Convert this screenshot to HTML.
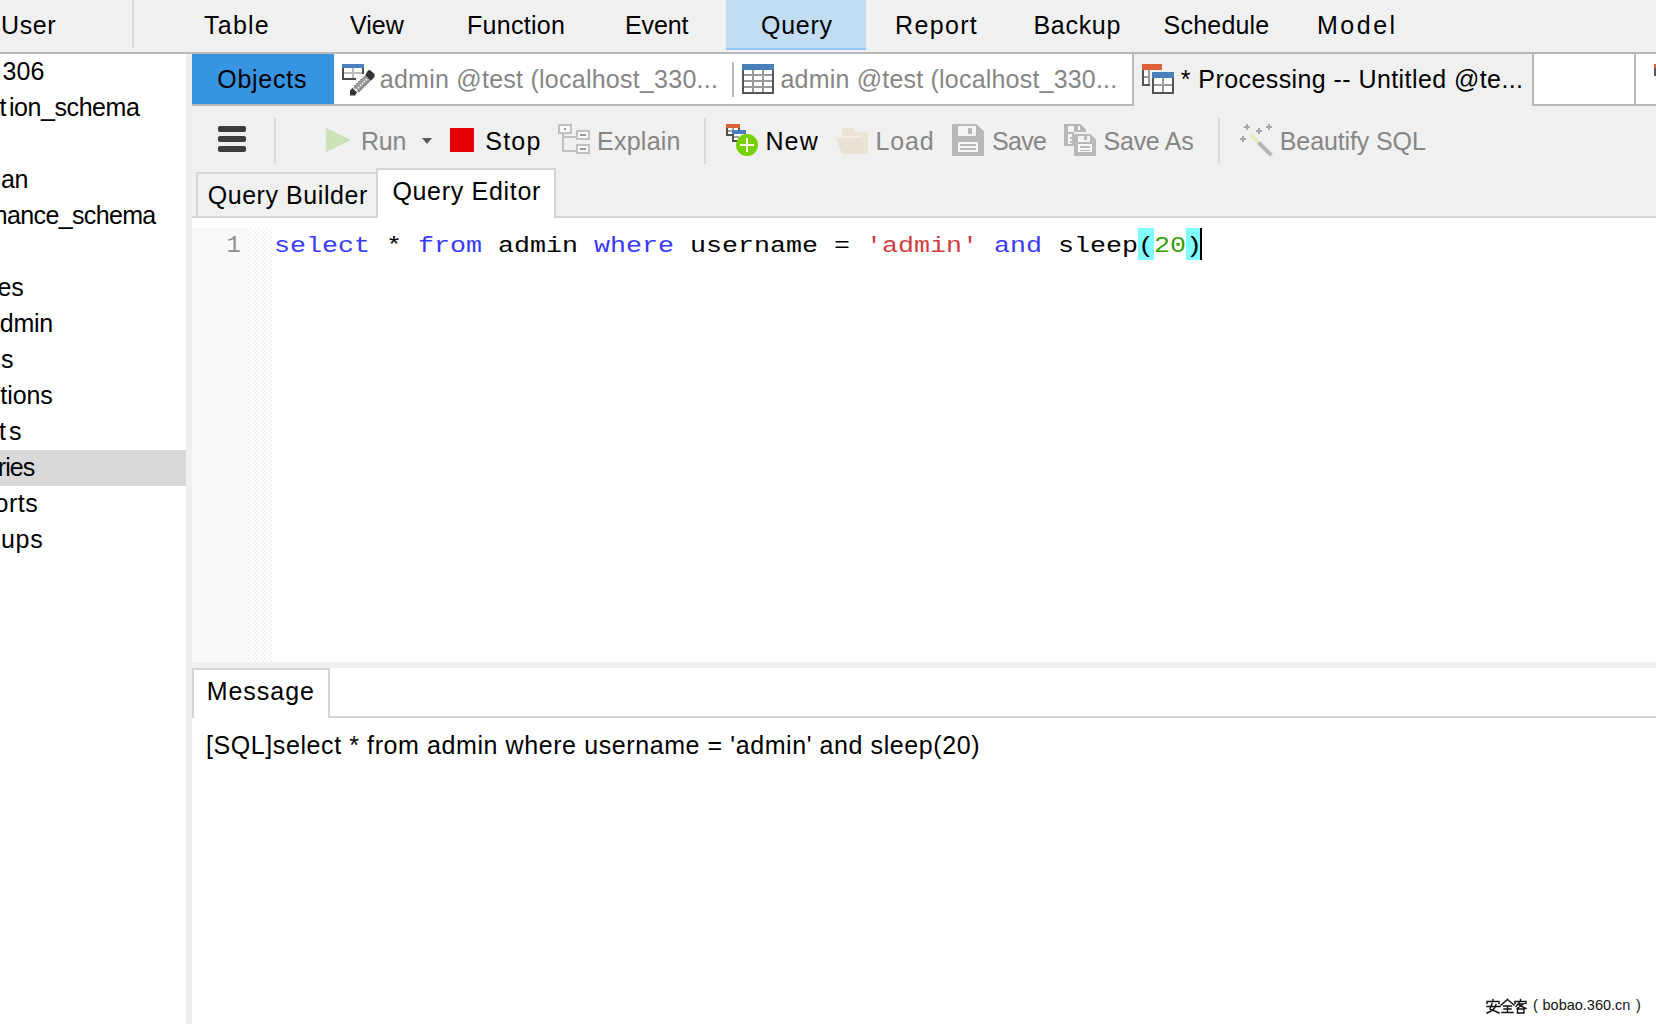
<!DOCTYPE html>
<html><head><meta charset="utf-8">
<style>
*{margin:0;padding:0;box-sizing:border-box}
html,body{width:1656px;height:1024px;overflow:hidden;background:#fff}
body{position:relative;font-family:"Liberation Sans",sans-serif;font-size:25px;color:#000}
.a{position:absolute}
.t{position:absolute;white-space:nowrap;line-height:1;font-size:25px}
svg{position:absolute;overflow:visible}
</style></head><body>
<div class="a" style="left:0;top:0;width:1656px;height:52px;background:#f0f0f0"></div>
<div class="a" style="left:0;top:52px;width:1656px;height:2px;background:#b8b8b8"></div>
<div class="a" style="left:132px;top:0;width:2px;height:48px;background:#dadada"></div>
<div class="a" style="left:726px;top:0;width:140px;height:48px;background:#c1dcf3"></div>
<div class="a" style="left:726px;top:48px;width:140px;height:2px;background:#92c6f4"></div>
<div class="t" style="left:1.0px;top:13.0px;letter-spacing:0.6px;color:#000;">User</div>
<div class="t" style="left:204.0px;top:13.0px;letter-spacing:1.25px;color:#000;">Table</div>
<div class="t" style="left:350.0px;top:13.0px;letter-spacing:0.0px;color:#000;">View</div>
<div class="t" style="left:467.0px;top:13.0px;letter-spacing:0.29px;color:#000;">Function</div>
<div class="t" style="left:625.0px;top:13.0px;letter-spacing:-0.12px;color:#000;">Event</div>
<div class="t" style="left:761.0px;top:13.0px;letter-spacing:0.75px;color:#000;">Query</div>
<div class="t" style="left:895.0px;top:13.0px;letter-spacing:1.34px;color:#000;">Report</div>
<div class="t" style="left:1033.4px;top:13.0px;letter-spacing:0.72px;color:#000;">Backup</div>
<div class="t" style="left:1163.6px;top:13.0px;letter-spacing:0.2px;color:#000;">Schedule</div>
<div class="t" style="left:1317.0px;top:13.0px;letter-spacing:2.5px;color:#000;">Model</div>
<div class="a" style="left:0;top:54px;width:186px;height:970px;overflow:hidden">
<div class="a" style="left:0;top:396px;width:186px;height:36px;background:#d9d9d9"></div>
<div class="t" style="left:2.6px;top:5.0px;letter-spacing:0.0px"><span style="position:absolute;right:calc(100% + 4px)">localhost_3</span>306</div>
<div class="t" style="left:9.0px;top:41.0px;letter-spacing:-0.44px"><span style="position:absolute;right:calc(100% + 3px)">informat</span>ion_schema</div>
<div class="t" style="left:1.0px;top:113.0px;letter-spacing:-0.3px"><span style="position:absolute;right:calc(100% + 0px)">pl</span>an</div>
<div class="t" style="left:7.0px;top:149.0px;letter-spacing:-0.64px"><span style="position:absolute;right:calc(100% + 0px)">perform</span>ance_schema</div>
<div class="t" style="left:11.3px;top:221.0px;letter-spacing:0.0px"><span style="position:absolute;right:calc(100% + 0px)">Table</span>s</div>
<div class="t" style="left:13.4px;top:257.0px;letter-spacing:-0.2px"><span style="position:absolute;right:calc(100% + 0px)">ad</span>min</div>
<div class="t" style="left:1.0px;top:293.0px;letter-spacing:0.0px"><span style="position:absolute;right:calc(100% + 3px)">View</span>s</div>
<div class="t" style="left:7.2px;top:329.0px;letter-spacing:-0.07px"><span style="position:absolute;right:calc(100% + 0px)">Funct</span>ions</div>
<div class="t" style="left:9.0px;top:365.0px;letter-spacing:0.0px"><span style="position:absolute;right:calc(100% + 3px)">Event</span>s</div>
<div class="t" style="left:5.2px;top:401.0px;letter-spacing:-1.0px"><span style="position:absolute;right:calc(100% + 0px)">Quer</span>ies</div>
<div class="t" style="left:8.9px;top:437.0px;letter-spacing:0.5px"><span style="position:absolute;right:calc(100% + 0px)">Repo</span>rts</div>
<div class="t" style="left:1.0px;top:473.0px;letter-spacing:0.7px"><span style="position:absolute;right:calc(100% + 0px)">Back</span>ups</div>
</div>
<div class="a" style="left:186px;top:54px;width:6px;height:970px;background:#f0f0f0"></div>
<div class="a" style="left:192px;top:54px;width:1464px;height:50px;background:#fff"></div>
<div class="a" style="left:192px;top:54px;width:142px;height:50px;background:#3694e2"></div>
<div class="t" style="left:217.2px;top:67.0px;letter-spacing:0.75px;color:#000;">Objects</div>
<div class="a" style="left:192px;top:104px;width:1464px;height:2px;background:#b8b8b8"></div>
<div class="a" style="left:732px;top:62px;width:2px;height:35px;background:#b8b8b8"></div>
<div class="t" style="left:379.8px;top:67.0px;letter-spacing:0.25px;color:#868686;">admin @test (localhost_330...</div>
<div class="t" style="left:780.5px;top:67.0px;letter-spacing:0.2px;color:#868686;">admin @test (localhost_330...</div>
<div class="a" style="left:1132px;top:54px;width:402px;height:52px;background:#f0f0f0;border-left:2px solid #b8b8b8;border-right:2px solid #b8b8b8"></div>
<div class="t" style="left:1180.8px;top:67.0px;letter-spacing:0.42px;color:#000;">* Processing -- Untitled @te...</div>
<div class="a" style="left:1634px;top:54px;width:2px;height:52px;background:#b8b8b8"></div>
<div class="a" style="left:192px;top:106px;width:1464px;height:112px;background:#f0f0f0"></div>
<div class="a" style="left:274px;top:118px;width:2px;height:46px;background:#dadada"></div>
<div class="a" style="left:704px;top:118px;width:2px;height:46px;background:#dadada"></div>
<div class="a" style="left:1218px;top:118px;width:2px;height:46px;background:#dadada"></div>
<div class="t" style="left:361.0px;top:129.0px;letter-spacing:-0.2px;color:#868686;">Run</div>
<div class="t" style="left:485.3px;top:129.0px;letter-spacing:1.2px;color:#000;">Stop</div>
<div class="t" style="left:597.0px;top:129.0px;letter-spacing:0.25px;color:#868686;">Explain</div>
<div class="t" style="left:765.4px;top:129.0px;letter-spacing:1.15px;color:#000;">New</div>
<div class="t" style="left:875.5px;top:129.0px;letter-spacing:0.83px;color:#868686;">Load</div>
<div class="t" style="left:992.0px;top:129.0px;letter-spacing:-0.67px;color:#868686;">Save</div>
<div class="t" style="left:1103.6px;top:129.0px;letter-spacing:-0.27px;color:#868686;">Save As</div>
<div class="t" style="left:1279.8px;top:129.0px;letter-spacing:-0.12px;color:#868686;">Beautify SQL</div>
<div class="a" style="left:196px;top:172px;width:182px;height:46px;border:2px solid #d6d6d6;border-bottom:0;background:#f0f0f0"></div>
<div class="a" style="left:192px;top:216px;width:1464px;height:2px;background:#d6d6d6"></div>
<div class="a" style="left:376px;top:168px;width:180px;height:50px;border:2px solid #d6d6d6;border-bottom:0;background:#fff"></div>
<div class="t" style="left:207.7px;top:182.6px;letter-spacing:0.56px;color:#000;">Query Builder</div>
<div class="t" style="left:392.4px;top:179.3px;letter-spacing:0.69px;color:#000;">Query Editor</div>
<div class="a" style="left:192px;top:218px;width:1464px;height:444px;background:#fff"></div>
<div class="a" style="left:192px;top:228px;width:56px;height:434px;background:#f9f9f9"></div>
<div class="a" style="left:248px;top:228px;width:24px;height:434px;background-color:#fff;background-image:linear-gradient(45deg,#f5f5f5 25%,transparent 25%,transparent 75%,#f5f5f5 75%),linear-gradient(45deg,#f5f5f5 25%,transparent 25%,transparent 75%,#f5f5f5 75%);background-size:4px 4px;background-position:0 0,2px 2px"></div>
<div class="a" style="left:1138px;top:228px;width:16px;height:32px;background:#80ffff"></div>
<div class="a" style="left:1186px;top:228px;width:14px;height:32px;background:#80ffff"></div>
<div class="a" style="left:193px;top:234px;width:48px;text-align:right;font-family:'Liberation Mono',monospace;font-size:24px;line-height:1;color:#909090">1</div>
<div class="a" style="left:274px;top:230px;height:31px;white-space:pre;font-family:'Liberation Mono',monospace;font-size:26.67px;letter-spacing:0px;line-height:31px;transform:scaleY(0.8);transform-origin:0 21px;color:#000"><span style="color:#3a3aff">select</span> * <span style="color:#3a3aff">from</span> admin <span style="color:#3a3aff">where</span> username = <span style="color:#d04040">'admin'</span> <span style="color:#3a3aff">and</span> sleep(<span style="color:#30a000">20</span>)</div>
<div class="a" style="left:1200px;top:228px;width:2px;height:32px;background:#000"></div>
<div class="a" style="left:192px;top:662px;width:1464px;height:6px;background:#f0f0f0"></div>
<div class="a" style="left:192px;top:716px;width:1464px;height:2px;background:#d6d6d6"></div>
<div class="a" style="left:192px;top:668px;width:138px;height:50px;border:2px solid #d6d6d6;border-bottom:0;background:#fff"></div>
<div class="t" style="left:206.7px;top:678.5px;letter-spacing:0.97px;color:#000;">Message</div>
<div class="t" style="left:206.0px;top:732.5px;letter-spacing:0.59px;color:#000;">[SQL]select * from admin where username = 'admin' and sleep(20)</div>
<!-- hamburger -->
<div class="a" style="left:218px;top:126px;width:28px;height:6px;background:#3c3c3c;border-radius:2px"></div>
<div class="a" style="left:218px;top:136px;width:28px;height:6px;background:#3c3c3c;border-radius:2px"></div>
<div class="a" style="left:218px;top:146px;width:28px;height:6px;background:#3c3c3c;border-radius:2px"></div>
<!-- run triangle -->
<svg style="left:0;top:0" width="1656" height="1024" viewBox="0 0 1656 1024">
<polygon points="326,128 351,140 326,152" fill="#cde0b8"/>
<polygon points="422,138 432,138 427,144" fill="#585858"/>
<rect x="450" y="128" width="24" height="24" fill="#e60000"/>
<!-- explain -->
<g fill="none" stroke="#c0c0c0" stroke-width="2" shape-rendering="crispEdges">
<rect x="559" y="125" width="12" height="8" fill="#fafafa"/>
<rect x="577" y="131" width="12" height="8" fill="#fafafa"/>
<rect x="577" y="145" width="12" height="8" fill="#fafafa"/>
<path d="M563 134 V151 H576 M564 137 H576"/>
</g>
<rect x="564" y="128" width="2" height="2" fill="#999"/>
<rect x="580" y="134" width="6" height="2" fill="#999"/>
<rect x="580" y="148" width="6" height="2" fill="#999"/>
<!-- new -->
<g shape-rendering="crispEdges">
<rect x="726" y="124" width="14" height="4" fill="#dc6038"/>
<rect x="726" y="128" width="14" height="8" fill="#fff"/>
<rect x="726" y="128" width="2" height="8" fill="#505050"/>
<rect x="726" y="134" width="8" height="2" fill="#505050"/>
<rect x="738" y="128" width="2" height="2" fill="#505050"/>
<rect x="728" y="130" width="4" height="2" fill="#a0a0a0"/>
<rect x="732" y="128" width="2" height="2" fill="#a0a0a0"/>
<rect x="732" y="130" width="14" height="4" fill="#4a7fbe"/>
<rect x="732" y="134" width="8" height="8" fill="#fff"/>
<rect x="732" y="134" width="2" height="8" fill="#505050"/>
<rect x="732" y="140" width="6" height="2" fill="#505050"/>
<rect x="734" y="136" width="5" height="2" fill="#a0a0a0"/>
</g>
<circle cx="747" cy="145" r="11" fill="#77d000"/>
<rect x="740" y="144" width="14" height="2" fill="#fff"/>
<rect x="746" y="138" width="2" height="14" fill="#fff"/>
<!-- load folder -->
<g fill="#ebe4d7" shape-rendering="crispEdges">
<path d="M842 128 H854 V132 H868 V154 H842 Z"/>
</g>
<path d="M836 138 H862 L868 154 H842 Z" fill="#e9e2d4" shape-rendering="crispEdges"/>
<path d="M836 136 H862 V138 H836 Z" fill="#f2eee6" shape-rendering="crispEdges"/>
<!-- save floppy -->
<g shape-rendering="crispEdges">
<path d="M952 124 H976 L984 132 V156 H952 Z" fill="#b8b8b8"/>
<rect x="958" y="126" width="18" height="10" fill="#f4f4f4"/>
<rect x="968" y="128" width="4" height="6" fill="#b8b8b8"/>
<rect x="958" y="142" width="20" height="10" fill="#f8f8f8"/>
<rect x="960" y="144" width="16" height="2" fill="#b8b8b8"/>
<rect x="960" y="148" width="16" height="2" fill="#b8b8b8"/>
</g>
<!-- save as -->
<g shape-rendering="crispEdges">
<path d="M1064 124 H1080 L1086 130 V132 H1074 V146 H1064 Z" fill="#b8b8b8"/>
<rect x="1068" y="126" width="6" height="6" fill="#f4f4f4"/>
<rect x="1068" y="134" width="4" height="10" fill="#f4f4f4"/>
<rect x="1070" y="137" width="2" height="2" fill="#b8b8b8"/>
<rect x="1070" y="141" width="2" height="2" fill="#b8b8b8"/>
<rect x="1078" y="126" width="2" height="4" fill="#f4f4f4"/>
<path d="M1074 134 H1090 L1096 140 V156 H1074 Z" fill="#b8b8b8"/>
<rect x="1078" y="136" width="12" height="6" fill="#f4f4f4"/>
<rect x="1084" y="136" width="3" height="4" fill="#b8b8b8"/>
<rect x="1078" y="144" width="14" height="8" fill="#f8f8f8"/>
<rect x="1080" y="146" width="10" height="2" fill="#b8b8b8"/>
<rect x="1080" y="150" width="10" height="1" fill="#b8b8b8"/>
</g>
<!-- wand -->
<g fill="#a8a8a8" shape-rendering="crispEdges">
<rect x="1244" y="126" width="6" height="2"/><rect x="1246" y="124" width="2" height="6"/>
<rect x="1266" y="126" width="6" height="2"/><rect x="1268" y="124" width="2" height="6"/>
<rect x="1256" y="130" width="6" height="2"/><rect x="1258" y="128" width="2" height="6"/>
<rect x="1240" y="138" width="6" height="2"/><rect x="1242" y="136" width="2" height="6"/>
</g>
<path d="M1252 136 L1258 142" stroke="#eaeac0" stroke-width="4" stroke-linecap="square"/>
<path d="M1260 144 L1270 154" stroke="#b4b4b4" stroke-width="4" stroke-linecap="square"/>
<!-- tab icon 1: table + pencil -->
<g shape-rendering="crispEdges">
<rect x="342" y="64" width="22" height="4" fill="#4a7fbe"/>
<rect x="344" y="68" width="18" height="10" fill="#fff"/>
<rect x="344" y="72" width="18" height="2" fill="#bbb"/>
<rect x="352" y="68" width="2" height="10" fill="#bbb"/>
<rect x="342" y="68" width="2" height="12" fill="#4a4a4a"/>
<rect x="342" y="78" width="14" height="2" fill="#4a4a4a"/>
<rect x="362" y="68" width="2" height="6" fill="#4a4a4a"/>
</g>
<polygon points="353.2,87.2 358.8,92.8 370.8,80.8 365.2,75.2" fill="#9a9a9a"/>
<path d="M356 90 L368 78" stroke="#fff" stroke-width="1.5" stroke-dasharray="1.4 1.4"/>
<path d="M354.5 86 L362 78.5 M358 91.5 L369 80.5" stroke="#555" stroke-width="1" stroke-dasharray="1.4 1.4"/>
<polygon points="365.2,75.2 370.8,80.8 374.5,77 374.5,74 370,70 368,70.5" fill="#333"/>
<polygon points="352.5,88 357,92.5 355,95.5 350,95.5 350,90.5" fill="#333"/>
<!-- tab icon 2: table -->
<g shape-rendering="crispEdges">
<rect x="742" y="64" width="32" height="6" fill="#4a7fbe"/>
<rect x="744" y="70" width="28" height="22" fill="#fff"/>
<rect x="742" y="70" width="2" height="24" fill="#555"/>
<rect x="772" y="70" width="2" height="24" fill="#555"/>
<rect x="742" y="92" width="32" height="2" fill="#555"/>
<rect x="752" y="70" width="2" height="22" fill="#999"/>
<rect x="762" y="70" width="2" height="22" fill="#999"/>
<rect x="744" y="74" width="28" height="2" fill="#999"/>
<rect x="744" y="80" width="28" height="2" fill="#999"/>
<rect x="744" y="86" width="28" height="2" fill="#999"/>
</g>
<!-- tab icon 3: processing -->
<g shape-rendering="crispEdges">
<rect x="1142" y="64" width="20" height="6" fill="#dc6038"/>
<rect x="1144" y="70" width="4" height="14" fill="#fff"/>
<rect x="1142" y="70" width="2" height="16" fill="#555"/>
<rect x="1142" y="84" width="8" height="2" fill="#555"/>
<rect x="1148" y="70" width="2" height="14" fill="#999"/>
<rect x="1144" y="76" width="4" height="2" fill="#999"/>
<rect x="1152" y="72" width="22" height="6" fill="#4a7fbe"/>
<rect x="1154" y="78" width="18" height="14" fill="#fff"/>
<rect x="1152" y="78" width="2" height="16" fill="#555"/>
<rect x="1172" y="78" width="2" height="16" fill="#555"/>
<rect x="1152" y="92" width="22" height="2" fill="#555"/>
<rect x="1162" y="78" width="2" height="14" fill="#999"/>
<rect x="1154" y="84" width="18" height="2" fill="#999"/>
<!-- partial icon at right edge -->
<rect x="1654" y="64" width="2" height="4" fill="#dc6038"/>
<rect x="1654" y="68" width="2" height="8" fill="#555"/>
</g>
</svg>
<svg style="left:0;top:0" width="1656" height="1024" viewBox="0 0 1656 1024">
<g fill="none" stroke="#111" stroke-width="1.4" stroke-linecap="square">
<!-- 安 -->
<path d="M1493 999.5 V1001 M1487 1003.5 V1001.5 H1499 V1003.5 M1487 1006.5 H1500 M1492 1003.5 L1490 1009 Q1495 1011 1499 1013 M1496 1004.5 Q1495 1010 1487 1013"/>
<!-- 全 -->
<path d="M1507.5 999.5 L1501 1005 M1507.5 999.5 L1514 1005 M1503.5 1006 H1511.5 M1504 1009 H1511 M1502 1012.5 H1513 M1507.5 1006 V1012.5"/>
<!-- 客 -->
<path d="M1520.5 999.5 V1001 M1515 1003.5 V1001.5 H1526 V1003.5 M1519 1003 L1516 1006.5 M1519 1004 H1523.5 L1517 1008.5 M1519.5 1005.5 L1526 1008.5 M1517.5 1009 H1524 V1013 H1517.5 Z"/>
</g>
</svg>
<div class="t" style="left:1533px;top:998px;font-size:14.5px;letter-spacing:0px;color:#111;text-shadow:0 0 1px #fff">(</div>
<div class="t" style="left:1542.5px;top:998px;font-size:14.5px;letter-spacing:0px;color:#111">bobao.360.cn</div>
<div class="t" style="left:1636px;top:998px;font-size:14.5px;color:#111">)</div>
</body></html>
